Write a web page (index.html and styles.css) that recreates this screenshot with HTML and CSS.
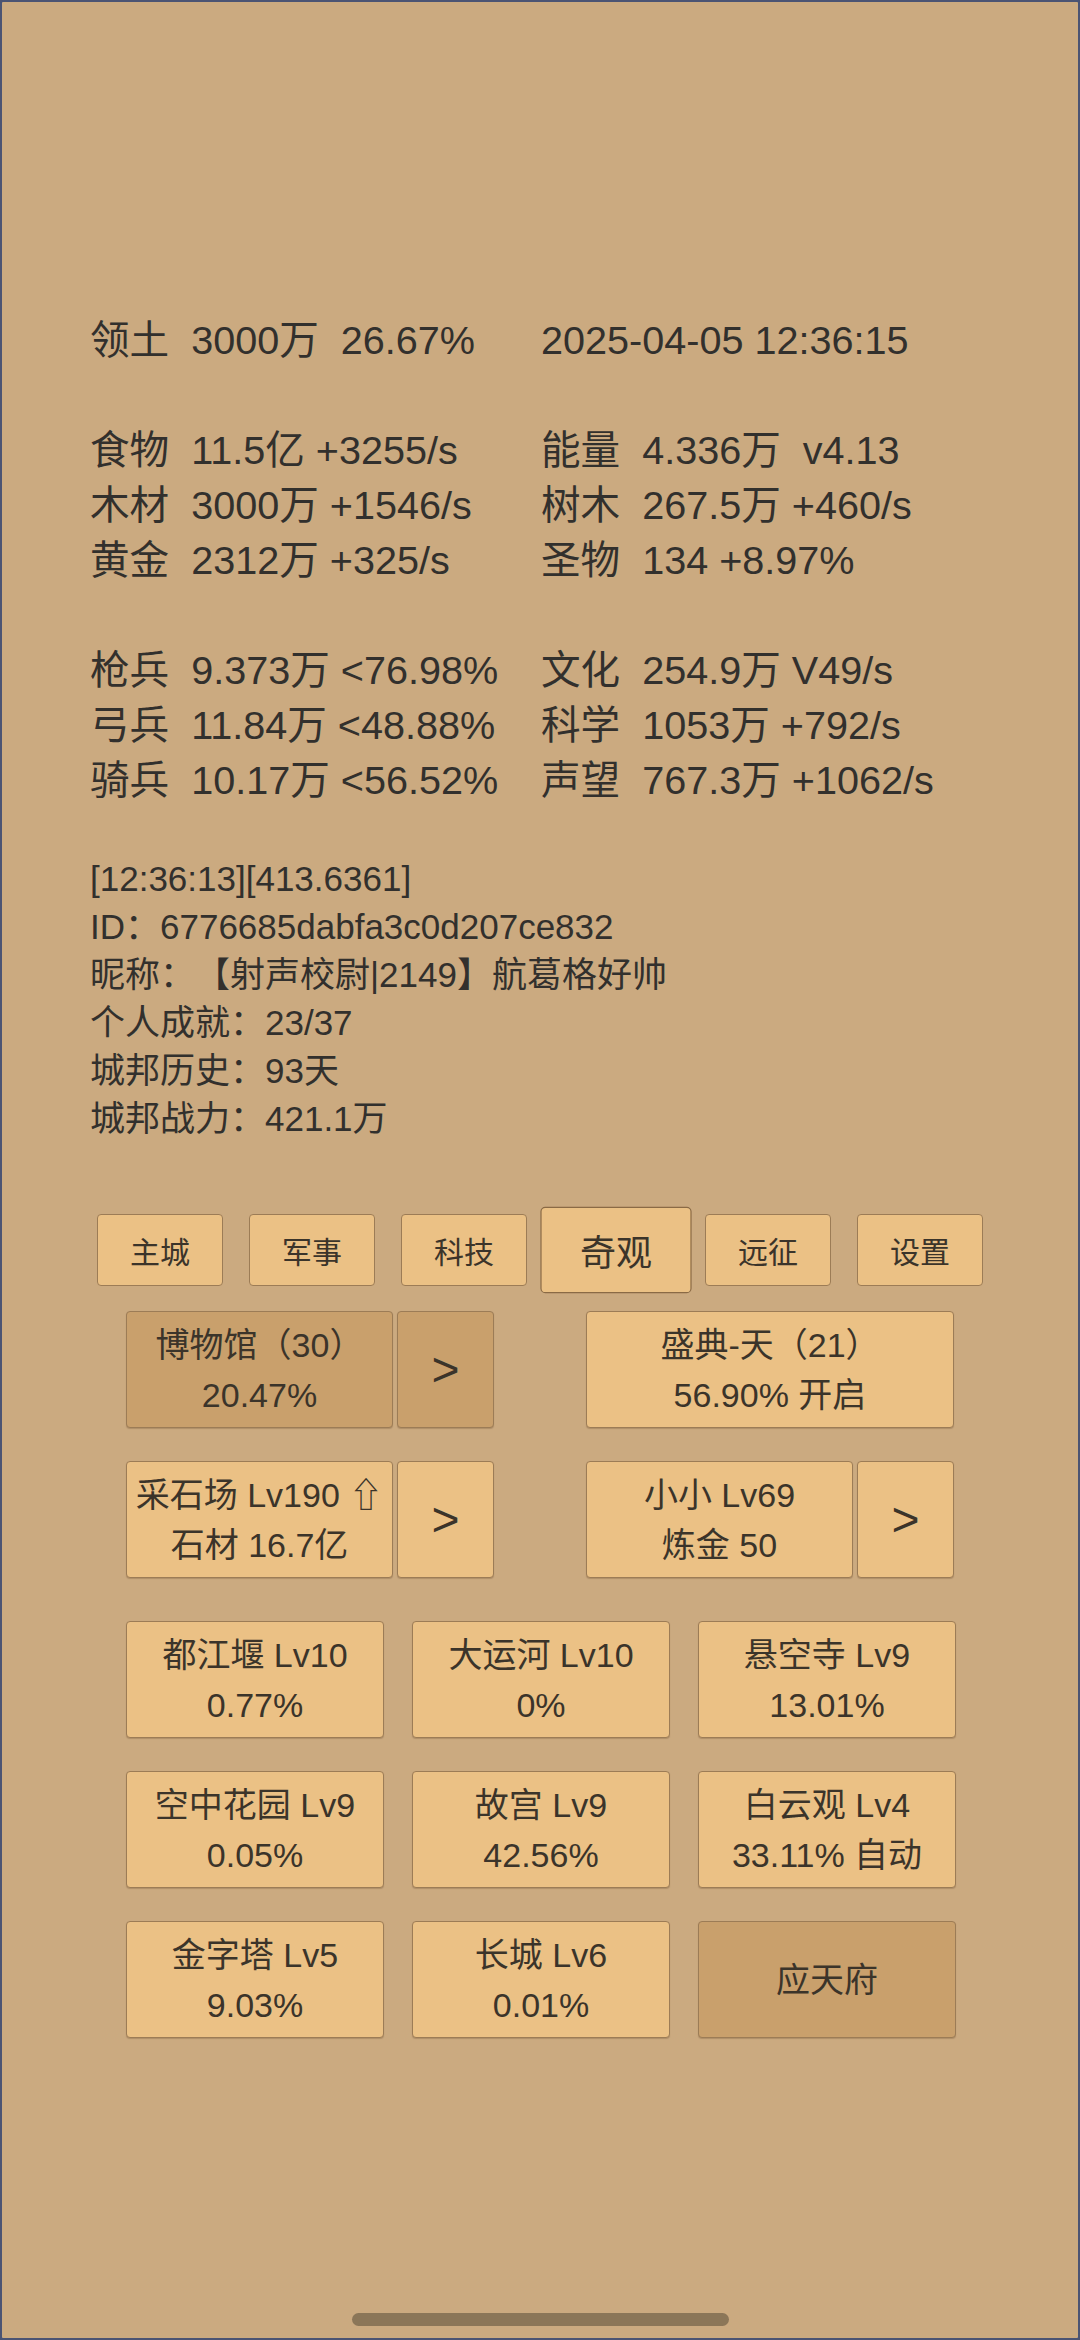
FILE: index.html
```html
<!DOCTYPE html>
<html lang="zh-CN">
<head>
<meta charset="utf-8">
<title>城邦</title>
<link rel="stylesheet" href="styles.css">
</head>
<body>
<div class="screen">
  <div class="stats">
    <div class="cell">领土  3000万  26.67%</div><div class="cell">2025-04-05 12:36:15</div>
    <div class="cell blank"> </div><div class="cell blank"> </div>
    <div class="cell">食物  11.5亿 +3255/s</div><div class="cell">能量  4.336万  v4.13</div>
    <div class="cell">木材  3000万 +1546/s</div><div class="cell">树木  267.5万 +460/s</div>
    <div class="cell">黄金  2312万 +325/s</div><div class="cell">圣物  134 +8.97%</div>
    <div class="cell blank"> </div><div class="cell blank"> </div>
    <div class="cell">枪兵  9.373万 &lt;76.98%</div><div class="cell">文化  254.9万 V49/s</div>
    <div class="cell">弓兵  11.84万 &lt;48.88%</div><div class="cell">科学  1053万 +792/s</div>
    <div class="cell">骑兵  10.17万 &lt;56.52%</div><div class="cell">声望  767.3万 +1062/s</div>
  </div>

  <div class="info">
    <div class="line">[12:36:13][413.6361]</div>
    <div class="line">ID：6776685dabfa3c0d207ce832</div>
    <div class="line">昵称：【射声校尉|2149】航葛格好帅</div>
    <div class="line">个人成就：23/37</div>
    <div class="line">城邦历史：93天</div>
    <div class="line">城邦战力：421.1万</div>
  </div>

  <div class="tabs">
    <div class="tab">主城</div>
    <div class="tab">军事</div>
    <div class="tab">科技</div>
    <div class="tab active">奇观</div>
    <div class="tab">远征</div>
    <div class="tab">设置</div>
  </div>

  <div class="wonders">
    <div class="pair-row">
      <div class="group">
        <div class="card main dark"><span>博物馆（30）</span><span>20.47%</span></div>
        <div class="card arrow dark">&gt;</div>
      </div>
      <div class="group">
        <div class="card full"><span>盛典-天（21）</span><span>56.90% 开启</span></div>
      </div>
    </div>
    <div class="pair-row gap-after">
      <div class="group">
        <div class="card main"><span>采石场 Lv190 <span class="up">⇧</span></span><span>石材 16.7亿</span></div>
        <div class="card arrow">&gt;</div>
      </div>
      <div class="group">
        <div class="card main"><span>小小 Lv69</span><span>炼金 50</span></div>
        <div class="card arrow">&gt;</div>
      </div>
    </div>
    <div class="grid-row">
      <div class="card"><span>都江堰 Lv10</span><span>0.77%</span></div>
      <div class="card"><span>大运河 Lv10</span><span>0%</span></div>
      <div class="card"><span>悬空寺 Lv9</span><span>13.01%</span></div>
    </div>
    <div class="grid-row">
      <div class="card"><span>空中花园 Lv9</span><span>0.05%</span></div>
      <div class="card"><span>故宫 Lv9</span><span>42.56%</span></div>
      <div class="card"><span>白云观 Lv4</span><span>33.11% 自动</span></div>
    </div>
    <div class="grid-row">
      <div class="card"><span>金字塔 Lv5</span><span>9.03%</span></div>
      <div class="card"><span>长城 Lv6</span><span>0.01%</span></div>
      <div class="card dark"><span>应天府</span></div>
    </div>
  </div>

  <div class="home-bar"></div>
</div>
</body>
</html>
```

FILE: styles.css
```css
html, body {
  margin: 0;
  padding: 0;
}

body {
  background: #4b5473;
}

.screen {
  box-sizing: border-box;
  width: 1080px;
  height: 2340px;
  border: 2px solid #4b5473;
  border-radius: 3px;
  background: #cbaa80;
  color: #32302d;
  font-family: "Liberation Sans", "Noto Sans CJK SC", sans-serif;
  text-spacing-trim: space-all;
  display: flex;
  flex-direction: column;
  overflow: hidden;
}

.stats {
  display: grid;
  grid-template-columns: 451px 451px;
  padding: 311px 0 0 88px;
  font-size: 39.6px;
  line-height: 55px;
}

.cell {
  white-space: pre;
  height: 55px;
}

.info {
  margin-top: 47px;
  padding-left: 88px;
  font-size: 35px;
  line-height: 48px;
}

.line {
  white-space: pre;
  height: 48px;
}

.tabs {
  display: flex;
  justify-content: center;
  gap: 26px;
  margin-top: 71px;
}

.tab {
  box-sizing: border-box;
  width: 126px;
  height: 72px;
  border: 1.5px solid #9c7c56;
  border-radius: 4px;
  background: #ebc185;
  color: #3b342a;
  font-size: 30px;
  display: flex;
  align-items: center;
  justify-content: center;
}

.tab.active {
  transform: scale(1.2);
  border-color: #8a6a45;
}

.wonders {
  margin-top: 25px;
  display: flex;
  flex-direction: column;
  gap: 33px;
}

.pair-row {
  display: flex;
  justify-content: center;
  gap: 92px;
}

.pair-row.gap-after {
  margin-bottom: 10px;
}

.group {
  display: flex;
  gap: 4px;
  width: 368px;
}

.grid-row {
  display: flex;
  justify-content: center;
  gap: 28px;
  padding-left: 2px;
}

.card {
  box-sizing: border-box;
  width: 258px;
  height: 117px;
  border: 1.5px solid #9c7c56;
  border-radius: 4px;
  background: #ebc185;
  color: #3b342a;
  font-size: 34px;
  line-height: 50px;
  display: flex;
  flex-direction: column;
  align-items: center;
  justify-content: center;
  text-align: center;
  white-space: nowrap;
  box-shadow: 0 1px 1px rgba(90, 60, 30, 0.25);
}

.card.main {
  width: 267px;
}

.card.full {
  width: 368px;
}

.card.arrow {
  width: 97px;
  font-size: 48px;
}

.card.dark {
  background: #c9a06c;
}

.up {
  font-family: "DejaVu Sans", sans-serif;
  font-size: 34px;
  font-weight: 300;
}

.home-bar {
  align-self: center;
  margin-top: auto;
  margin-bottom: 12px;
  width: 377px;
  height: 13px;
  border-radius: 7px;
  background: #8b7658;
}
```
